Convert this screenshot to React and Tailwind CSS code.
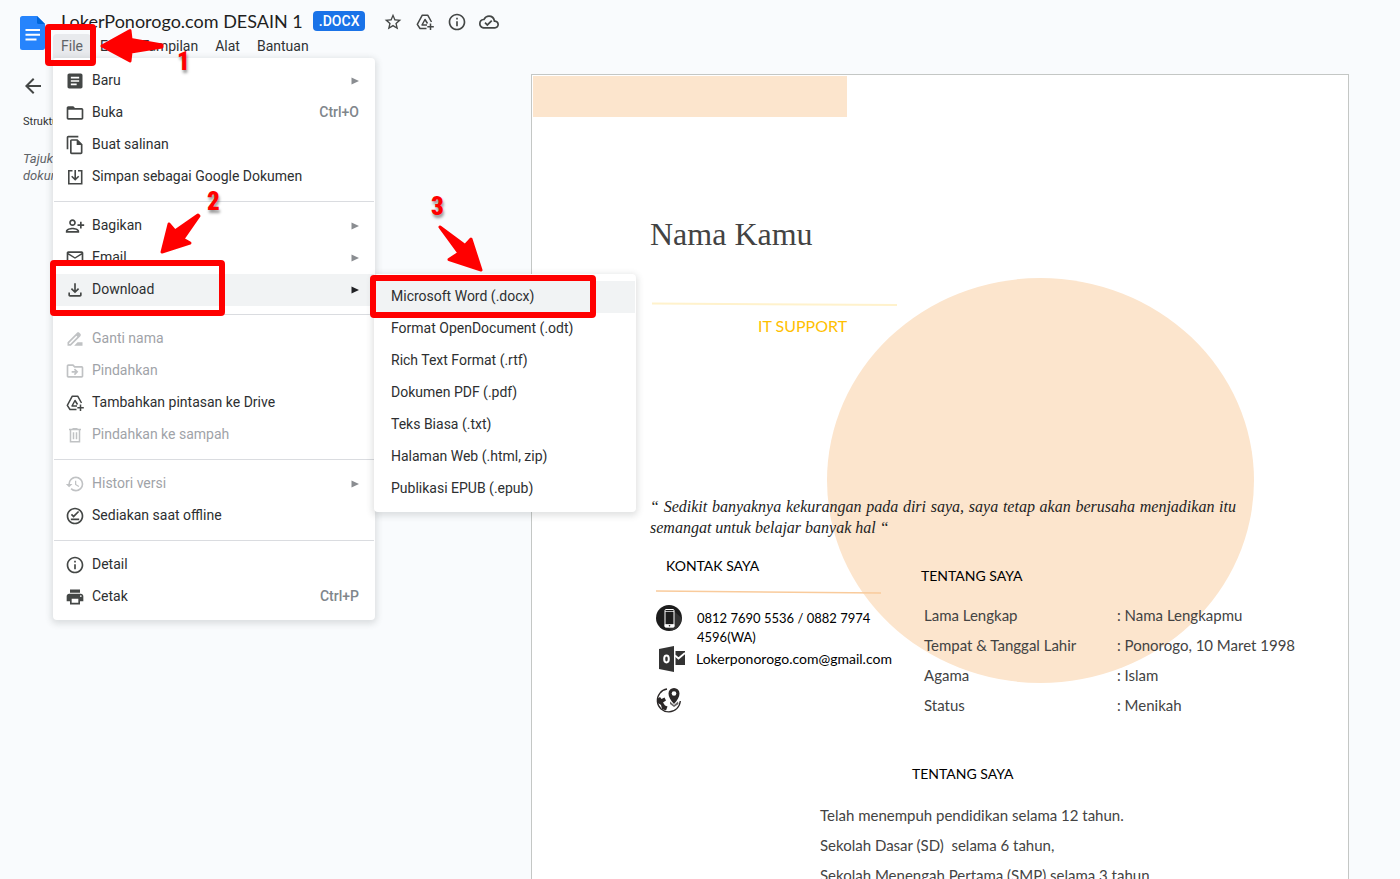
import clsx from "clsx";
import {
  MdArrowBack,
  MdArticle,
  MdDriveFileRenameOutline,
  MdFolderOpen,
  MdHistory,
  MdInfoOutline,
  MdMailOutline,
  MdOutlineCloudDone,
  MdOutlineDriveFileMove,
  MdOutlineFileCopy,
  MdOutlineFileDownload,
  MdOutlineOfflinePin,
  MdOutlinePersonAddAlt1,
  MdPrint,
  MdStarBorder,
} from "react-icons/md";

const SaveAsIcon = (props) => (
  <svg viewBox="-1 -1 20 20" fill="none" stroke="currentColor" strokeWidth="1.6" {...props}>
    <path d="M6.5 2.8H2.8v12.900h12.900V2.800h-3.700M9.200 2v9.500M5.700 8.200 9.200 11.700l3.500-3.500" />
  </svg>
);

const TrashIcon = (props) => (
  <svg viewBox="-1 -1 20 20" fill="none" stroke="currentColor" strokeWidth="1.5" {...props}>
    <path d="M3 3.5h12M6.5 2.7h5M4.5 3.5v12.2h9V3.5M7.5 6.2v7M10.5 6.2v7" />
  </svg>
);

const DriveAddIcon = (props) => (
  <svg viewBox="0 0 20 20" fill="none" stroke="currentColor" strokeWidth="1.5" {...props}>
    <path d="M11.500 16.500H5L2.300 12.300 7.300 3.200h5.400L16.500 10" strokeLinejoin="round" />
    <path d="M12 13H7L10 7.500 12.500 11.500" strokeLinejoin="round" />
    <path d="M15.500 11.500v6.500M12.300 14.800h6.500" />
  </svg>
);

const fileMenu = [
  [
    { label: "Baru", icon: MdArticle, arrow: true },
    { label: "Buka", icon: MdFolderOpen, shortcut: "Ctrl+O" },
    { label: "Buat salinan", icon: MdOutlineFileCopy },
    { label: "Simpan sebagai Google Dokumen", icon: SaveAsIcon },
  ],
  [
    { label: "Bagikan", icon: MdOutlinePersonAddAlt1, arrow: true },
    { label: "Email", icon: MdMailOutline, arrow: true },
    { label: "Download", icon: MdOutlineFileDownload, arrow: true, open: true },
  ],
  [
    { label: "Ganti nama", icon: MdDriveFileRenameOutline, disabled: true },
    { label: "Pindahkan", icon: MdOutlineDriveFileMove, disabled: true },
    { label: "Tambahkan pintasan ke Drive", icon: DriveAddIcon },
    { label: "Pindahkan ke sampah", icon: TrashIcon, disabled: true },
  ],
  [
    { label: "Histori versi", icon: MdHistory, arrow: true, disabled: true },
    { label: "Sediakan saat offline", icon: MdOutlineOfflinePin },
  ],
  [
    { label: "Detail", icon: MdInfoOutline },
    { label: "Cetak", icon: MdPrint, shortcut: "Ctrl+P" },
  ],
];

const downloadFormats = [
  "Microsoft Word (.docx)",
  "Format OpenDocument (.odt)",
  "Rich Text Format (.rtf)",
  "Dokumen PDF (.pdf)",
  "Teks Biasa (.txt)",
  "Halaman Web (.html, zip)",
  "Publikasi EPUB (.epub)",
];

const profile = [
  ["Lama Lengkap", "Nama Lengkapmu"],
  ["Tempat & Tanggal Lahir", "Ponorogo, 10 Maret 1998"],
  ["Agama", "Islam"],
  ["Status", "Menikah"],
];

const DocsLogo = () => (
  <svg viewBox="0 0 25 34" className="h-[34px] w-[25px]" aria-hidden="true">
    <path d="M2.5 0H17l8 8v23.500a2.500 2.500 0 0 1-2.500 2.500h-20A2.500 2.500 0 0 1 0 31.500v-29A2.500 2.500 0 0 1 2.500 0z" fill="#2684fc" />
    <path d="M17 0l8 8h-6.500A1.500 1.500 0 0 1 17 6.500z" fill="#0066da" />
    <path d="M5.500 14h14.500M5.500 18.700h14.500M5.500 23.400h11" stroke="#fff" strokeWidth="2" />
  </svg>
);

const DownloadMenu = () => (
  <ul className="absolute left-full top-0 z-10 w-[262px] rounded border border-transparent bg-white py-1.5 shadow-[0_2px_6px_2px_rgba(60,64,67,0.15)]">
    {downloadFormats.map((format, i) => (
      <li key={format}>
        <button
          type="button"
          className={clsx("flex h-8 w-full items-center px-4 pb-0.5", i === 0 && "bg-[#f1f3f4]")}
        >
          {format}
        </button>
      </li>
    ))}
  </ul>
);

const MenuItem = ({ item }) => {
  const Icon = item.icon;
  return (
    <li className="relative">
      <button
        type="button"
        disabled={item.disabled}
        className={clsx(
          "flex h-8 w-full items-center gap-[7px] pr-[15px] pl-[11px] text-left",
          item.open && "bg-[#f1f3f4]",
          item.disabled && "text-[#9fa3a8]"
        )}
      >
        <Icon
          aria-hidden="true"
          className={clsx("size-5 shrink-0", item.disabled ? "text-[#c0c2c4]" : "text-[#444746]")}
        />
        <span className="flex-1 pb-0.5">{item.label}</span>
        {item.shortcut && (
          <span className="pb-0.5 font-medium text-[#80868b]">{item.shortcut}</span>
        )}
        {item.arrow && (
          <svg
            viewBox="0 0 8 8"
            aria-hidden="true"
            className={clsx("size-2", item.open ? "text-[#202124]" : "text-[#8a8d91]")}
          >
            <path d="M0.500 0.500v7L8 4z" fill="currentColor" />
          </svg>
        )}
      </button>
      {item.open && <DownloadMenu />}
    </li>
  );
};

const FileMenu = () => (
  <div className="absolute top-full left-0 z-10 w-[322px] rounded border border-transparent bg-white py-1.5 text-[#2d2f31] shadow-[0_2px_6px_2px_rgba(60,64,67,0.15)]">
    {fileMenu.map((group, i) => (
      <div key={group[0].label}>
        {i > 0 && <hr className="my-2 border-[#dadce0]" />}
        <ul>
          {group.map((item) => (
            <MenuItem key={item.label} item={item} />
          ))}
        </ul>
      </div>
    ))}
  </div>
);

const Header = () => (
  <header className="flex items-start gap-2 pl-5 pt-2">
    <a href="#" aria-label="Dokumen" className="mt-2">
      <DocsLogo />
    </a>
    <div>
      <div className="flex h-[26px] items-center pl-2">
        <h1 className="font-[Lato,sans-serif] text-[18px] text-[#1f1f1f]">
          LokerPonorogo.com DESAIN 1
        </h1>
        <span className="ml-2.5 flex h-5 items-center rounded bg-[#1a73e8] px-1.5 text-sm font-medium text-white">
          .DOCX
        </span>
        <div className="ml-[18px] flex gap-3 pt-0.5 text-[#444746]">
          <button type="button" aria-label="Bintangi">
            <MdStarBorder className="size-5" />
          </button>
          <button type="button" aria-label="Tambahkan ke Drive">
            <DriveAddIcon className="size-5" />
          </button>
          <button type="button" aria-label="Detail">
            <MdInfoOutline className="size-5" />
          </button>
          <button type="button" aria-label="Status dokumen">
            <MdOutlineCloudDone className="size-5" />
          </button>
        </div>
      </div>
      <nav className="relative flex h-6 gap-px text-[#303234]">
        <button type="button" className="rounded-t bg-[#e8eaed] px-2 text-[#5f6368]">
          File
        </button>
        <button type="button" className="px-2">Edit</button>
        <button type="button" className="px-2">Tampilan</button>
        <button type="button" className="px-2">Alat</button>
        <button type="button" className="px-2">Bantuan</button>
        <FileMenu />
      </nav>
    </div>
  </header>
);

const Outline = () => (
  <aside className="w-[480px] shrink-0 pl-[23px] pt-4">
    <button type="button" aria-label="Tutup kerangka" className="-ml-0.5 block">
      <MdArrowBack className="size-6 text-[#444746]" />
    </button>
    <h2 className="mt-4 text-[11px] leading-4 text-[#303234]">Struktur</h2>
    <p className="mt-5 w-16 text-[13px] leading-[17px] text-[#5f6368] italic">Tajuk dokumen</p>
  </aside>
);

const PhoneIcon = () => (
  <svg viewBox="0 0 26 26" className="size-[26px]" aria-hidden="true">
    <circle cx="13" cy="13" r="13" fill="#1c1c1c" />
    <path d="M17 5l8.500 8A13 13 0 0 1 16 25.500L9 21z" fill="#333" />
    <rect x="9" y="4.500" width="9" height="17.500" rx="1" fill="#1c1c1c" stroke="#fff" />
    <path d="M9 6.500h9M9 19.500h9v2.500H9z" fill="#fff" stroke="#fff" strokeWidth="0.700" />
    <circle cx="13.500" cy="20.800" r="0.800" fill="#1c1c1c" />
  </svg>
);

const OutlookIcon = () => (
  <svg viewBox="0 0 26 26" className="size-[26px]" aria-hidden="true">
    <path d="M0 3l15-3v26L0 23z" fill="#333" />
    <ellipse cx="7.500" cy="13" rx="2.300" ry="3.400" fill="none" stroke="#fff" strokeWidth="2" />
    <path d="M16.500 5H26v14h-9.500z" fill="#333" />
    <path d="M16 9.500l3.500 3L26 7" fill="none" stroke="#fff" strokeWidth="1.800" />
  </svg>
);

const GlobePinIcon = () => (
  <svg viewBox="0 0 26 26" className="size-[26px]" aria-hidden="true">
    <path d="M11 2A11.500 11.500 0 1 0 24.300 14" fill="none" stroke="#2b2727" strokeWidth="1.300" />
    <path d="M1 12l3-2 1.500 2 3-1.500 1.500 3-3 2 2 3 2.500 1-1.500 4-4-1.500-1-4-3-2z" fill="#2b2727" />
    <path d="M18 17c-3.500-4-5.500-7-5.500-10.500a5.500 5.500 0 0 1 11 0C23.500 10 21.500 13 18 17z" fill="#2b2727" />
    <path d="M14 14.500l4 3.500 4-3.500 0.500 2.500-4.500 3-4-3z" fill="#2b2727" opacity="0.700" />
    <circle cx="18" cy="6.500" r="2.300" fill="#fff" />
  </svg>
);

const Resume = () => (
  <article className="relative w-[818px] border border-[#c4c7c5] bg-white font-[Lato,sans-serif] text-[#434343]">
    <div className="absolute top-[203px] left-[295px] h-[405px] w-[427px] rounded-[50%] bg-[#fce5cd]" />
    <div className="relative pb-20">
      <div className="m-px h-[41px] w-[314px] bg-[#fce5cd]" />
      <div className="pl-[118px]">
        <h2 className="mt-[97px] font-['Liberation_Serif',serif] text-[32px] leading-10">Nama Kamu</h2>
        <svg viewBox="0 0 248 4" className="mt-12 h-1 w-[248px]" aria-hidden="true">
          <path d="M2 1.500L247 3" stroke="#fff2cc" strokeWidth="2" />
        </svg>
        <p className="mt-2 pl-[108px] text-[16px] leading-6 text-[#ffc000]">IT SUPPORT</p>
        <p className="mt-[158px] w-[586px] text-justify font-['Liberation_Serif',serif] text-[16px] leading-[21px] text-[#222] italic">
          “ Sedikit banyaknya kekurangan pada diri saya, saya tetap akan berusaha menjadikan itu
          semangat untuk belajar banyak hal “
        </p>
        <div className="flex">
          <section className="w-[271px] pt-4">
            <h3 className="pl-4 text-[14px] leading-6 text-black">KONTAK SAYA</h3>
            <svg viewBox="0 0 232 4" className="mt-3 h-1 w-[232px]" aria-hidden="true">
              <path d="M6 1L231 3" stroke="#f9cb9c" strokeWidth="1.500" />
            </svg>
            <ul className="mt-[11px] pl-1.5 text-[14px] leading-[19px] text-black">
              <li className="flex h-10 gap-[15px]">
                <PhoneIcon />
                <span className="w-[190px] pt-1 text-[13px] leading-[19px]">
                  0812 7690 5536 / 0882 7974 4596(WA)
                </span>
              </li>
              <li className="flex h-10 gap-[11px] pt-px pl-[3px]">
                <OutlookIcon />
                <span className="pt-[3px]">Lokerponorogo.com@gmail.com</span>
              </li>
              <li className="pt-0.5">
                <GlobePinIcon />
              </li>
            </ul>
          </section>
          <section className="pt-[26px]">
            <h3 className="text-[14px] leading-6 text-black">TENTANG SAYA</h3>
            <table className="mt-3 ml-[3px] text-[15px] leading-[30px]">
              <tbody>
                {profile.map(([label, value]) => (
                  <tr key={label}>
                    <th scope="row" className="w-[193px] p-0 text-left font-normal">{label}</th>
                    <td className="p-0">: {value}</td>
                  </tr>
                ))}
              </tbody>
            </table>
          </section>
        </div>
        <section className="mt-[42px] pl-[170px]">
          <h3 className="pl-[92px] text-[14px] leading-6 text-black">TENTANG SAYA</h3>
          <div className="mt-[14px] text-[15px] leading-[30px] whitespace-pre-wrap">
            <p>Telah menempuh pendidikan selama 12 tahun.</p>
            <p>{"Sekolah Dasar (SD)  selama 6 tahun,"}</p>
            <p>Sekolah Menengah Pertama (SMP) selama 3 tahun</p>
          </div>
        </section>
      </div>
    </div>
  </article>
);

// red step markers drawn on top of the page
const Annotations = () => (
  <div className="pointer-events-none absolute inset-0 z-20 font-['Liberation_Sans_Narrow','Roboto_Condensed',Roboto,sans-serif] text-[25px] leading-6 font-black text-[#f00]">
    <div className="absolute top-6 left-[45px] h-[42px] w-[51px] rounded-sm border-6 border-[#f00]" />
    <div className="absolute top-[260px] left-[50px] h-14 w-[175px] rounded-sm border-6 border-[#f00]" />
    <div className="absolute top-[275px] left-[370px] h-[43px] w-[226px] rounded-sm border-6 border-[#f00]" />
    <svg
      viewBox="0 0 500 280"
      className="absolute top-0 left-0 h-[280px] w-[500px]"
      fill="#f00"
      stroke="#f00"
      strokeWidth="3"
      strokeLinejoin="round"
      aria-hidden="true"
    >
      <path d="M102 46L130 30.500 131 39.500 162 45V47L131 52 130 61z" />
      <path d="M162 252L169 224 175 231 198 215 199 216 183 239 190 243z" />
      <path d="M440 227L465 245.500 471 239 481 270 449 259.500 459 253z" />
    </svg>
    <span className="absolute top-[50px] left-[177px] [text-shadow:1px_3px_3px_rgba(0,0,0,0.4)]">1</span>
    <span className="absolute top-[190px] left-[207px] [text-shadow:1px_3px_3px_rgba(0,0,0,0.4)]">2</span>
    <span className="absolute top-[195px] left-[431px] [text-shadow:1px_3px_3px_rgba(0,0,0,0.4)]">3</span>
  </div>
);

const App = () => {
  return (
    <div className="relative flex h-screen flex-col overflow-hidden bg-[#f9fbfd] font-[Roboto,sans-serif] text-[14px]">
      <Header />
      <main className="flex">
        <Outline />
        <div className="flex flex-1 justify-center pt-4">
          <Resume />
        </div>
      </main>
      <Annotations />
    </div>
  );
};

export default App;
